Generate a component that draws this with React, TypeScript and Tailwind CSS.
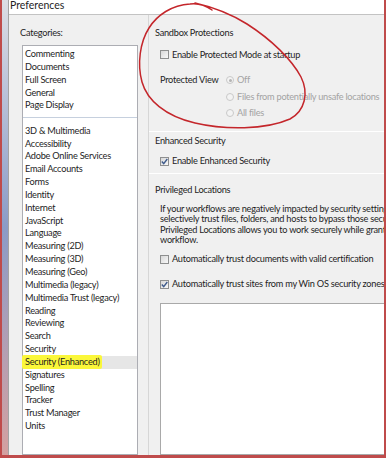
import React from "react";

const topItems = ["Commenting", "Documents", "Full Screen", "General", "Page Display"];
const moreItems = [
  "3D & Multimedia",
  "Accessibility",
  "Adobe Online Services",
  "Email Accounts",
  "Forms",
  "Identity",
  "Internet",
  "JavaScript",
  "Language",
  "Measuring (2D)",
  "Measuring (3D)",
  "Measuring (Geo)",
  "Multimedia (legacy)",
  "Multimedia Trust (legacy)",
  "Reading",
  "Reviewing",
  "Search",
  "Security",
  "Security (Enhanced)",
  "Signatures",
  "Spelling",
  "Tracker",
  "Trust Manager",
  "Units",
];

function Check({ on }: { on?: boolean }) {
  return (
    <span className="flex h-[9px] w-[9px] shrink-0 items-center justify-center border border-[#8e8f8f] bg-linear-to-br from-[#d8d8d8] to-[#f8f8f8]">
      {on && (
        <svg width="7" height="7" viewBox="0 0 7 7">
          <path d="M0.8 3.6 L2.7 5.6 L6.3 1" stroke="#3f5b8c" strokeWidth="1.4" fill="none" />
        </svg>
      )}
    </span>
  );
}

function Radio({ on }: { on?: boolean }) {
  return (
    <span className="flex h-[8px] w-[8px] shrink-0 items-center justify-center rounded-full border border-[#c9c9c9] bg-[#f3f3f3]">
      {on && <span className="h-[3px] w-[3px] rounded-full bg-[#b4b4b4]" />}
    </span>
  );
}

function Item({ label, selected }: { label: string; selected?: boolean }) {
  return (
    <div className={selected ? "relative h-[12.85px] bg-[#e6e6e6] pl-[2px] leading-[12.85px]" : "relative h-[12.85px] pl-[2px] leading-[12.85px]"}>
      {selected && <div className="absolute -left-[1px] -top-[1px] h-[14px] w-[80px] rounded-[2px] bg-[#fbf73a] blur-[0.6px]" />}
      <span className="relative">{label}</span>
    </div>
  );
}

export default function App() {
  return (
    <div className="relative h-[458px] w-[386px] overflow-hidden border-x-2 border-b-[3px] border-[#bf4b4b] font-['Lato',sans-serif] text-[9.2px] tracking-[-0.25px] text-[#1e1e1e]">
      <div className="flex h-full">
        {/* window behind the dialog */}
        <div className="w-[6px] shrink-0 bg-linear-to-b from-[#dcdde4] via-[#8b9bc6] to-[#d4a0a0]" />

        <div className="flex min-w-0 flex-1 flex-col border-l border-[#a3a3a3] bg-[#f0f0f0]">
          <div className="h-[15px] shrink-0 border-b border-[#c3c3c3] bg-white pl-[1px] pt-[1px] text-[10.5px] leading-[9px] tracking-normal">
            Preferences
          </div>

          <div className="flex min-h-0 flex-1">
            {/* categories */}
            <div className="flex w-[139px] shrink-0 flex-col pl-[11px] pt-[11px]">
              <div className="h-[13px] leading-[13px]">Categories:</div>
              <div className="ml-[2px] mt-[6px] w-[116px] flex-1 border border-[#acadb3] bg-white pt-[2px]">
                {topItems.map((c) => (
                  <Item key={c} label={c} />
                ))}
                <div className="mb-[6.5px] mt-[5px] h-px bg-[#c6d0de]" />
                {moreItems.map((c) => (
                  <Item key={c} label={c} selected={c === "Security (Enhanced)"} />
                ))}
              </div>
            </div>

            {/* settings */}
            <div className="flex min-w-0 flex-1 flex-col overflow-hidden border-l border-[#d6d6d6] pl-[6px] pt-[11px]">
              <div className="h-[13px] leading-[13px]">Sandbox Protections</div>
              <div className="ml-[5px] mt-[9px] flex h-[13px] items-center gap-[3px] whitespace-nowrap">
                <Check />
                <span>Enable Protected Mode at startup</span>
              </div>
              <div className="ml-[5px] mt-[11px] flex">
                <div className="w-[66px] shrink-0 leading-[16.5px]">Protected View</div>
                <div className="flex flex-col text-[#a3a3a3]">
                  <div className="flex h-[16.5px] items-center gap-[3px]">
                    <Radio on />
                    <span>Off</span>
                  </div>
                  <div className="flex h-[16.5px] items-center gap-[3px] whitespace-nowrap">
                    <Radio />
                    <span>Files from potentially unsafe locations</span>
                  </div>
                  <div className="flex h-[16px] items-center gap-[3px]">
                    <Radio />
                    <span>All files</span>
                  </div>
                </div>
              </div>

              <div className="-ml-[6px] mt-[9.5px] h-px shrink-0 border-b border-white bg-[#dadada]" />
              <div className="mt-[2px] h-[13px] leading-[13px]">Enhanced Security</div>
              <div className="ml-[5px] mt-[8px] flex h-[13px] items-center gap-[3px] whitespace-nowrap">
                <Check on />
                <span>Enable Enhanced Security</span>
              </div>
              <div className="-ml-[6px] mt-[5px] h-px shrink-0 border-b border-white bg-[#dadada]" />

              <div className="mt-[9px] h-[13px] leading-[13px]">Privileged Locations</div>
              <div className="ml-[5px] mt-[8px] whitespace-nowrap leading-[10.6px]">
                <div>If your workflows are negatively impacted by security settings, use Privileged Locations to</div>
                <div>selectively trust files, folders, and hosts to bypass those security restrictions.</div>
                <div>Privileged Locations allows you to work securely while granting trust to items in your</div>
                <div>workflow.</div>
              </div>
              <div className="ml-[5px] mt-[7px] flex h-[13px] items-center gap-[3px] whitespace-nowrap">
                <Check />
                <span>Automatically trust documents with valid certification</span>
              </div>
              <div className="ml-[5px] mt-[12px] flex h-[13px] items-center gap-[3px] whitespace-nowrap">
                <Check on />
                <span>Automatically trust sites from my Win OS security zones</span>
              </div>
              <div className="ml-[5px] mt-[12px] w-[260px] flex-1 border border-[#a9a9a9] bg-white" />
            </div>
          </div>
        </div>
      </div>

      {/* red pen annotation */}
      <svg className="pointer-events-none absolute left-[-2px] top-0" width="386" height="458" viewBox="0 0 386 458">
        <path
          d="M212 10 C205 5 198 3 190 4 C172 5 157 15 149 28 C140 42 137 64 142 82 C147 100 165 116 195 123 C225 130 265 130 290 119 C305 111 309 93 301 77 C292 60 272 40 247 24 C228 12 208 6 195 3"
          stroke="#c4262b"
          strokeWidth="1.5"
          fill="none"
          strokeLinecap="round"
        />
      </svg>
    </div>
  );
}
